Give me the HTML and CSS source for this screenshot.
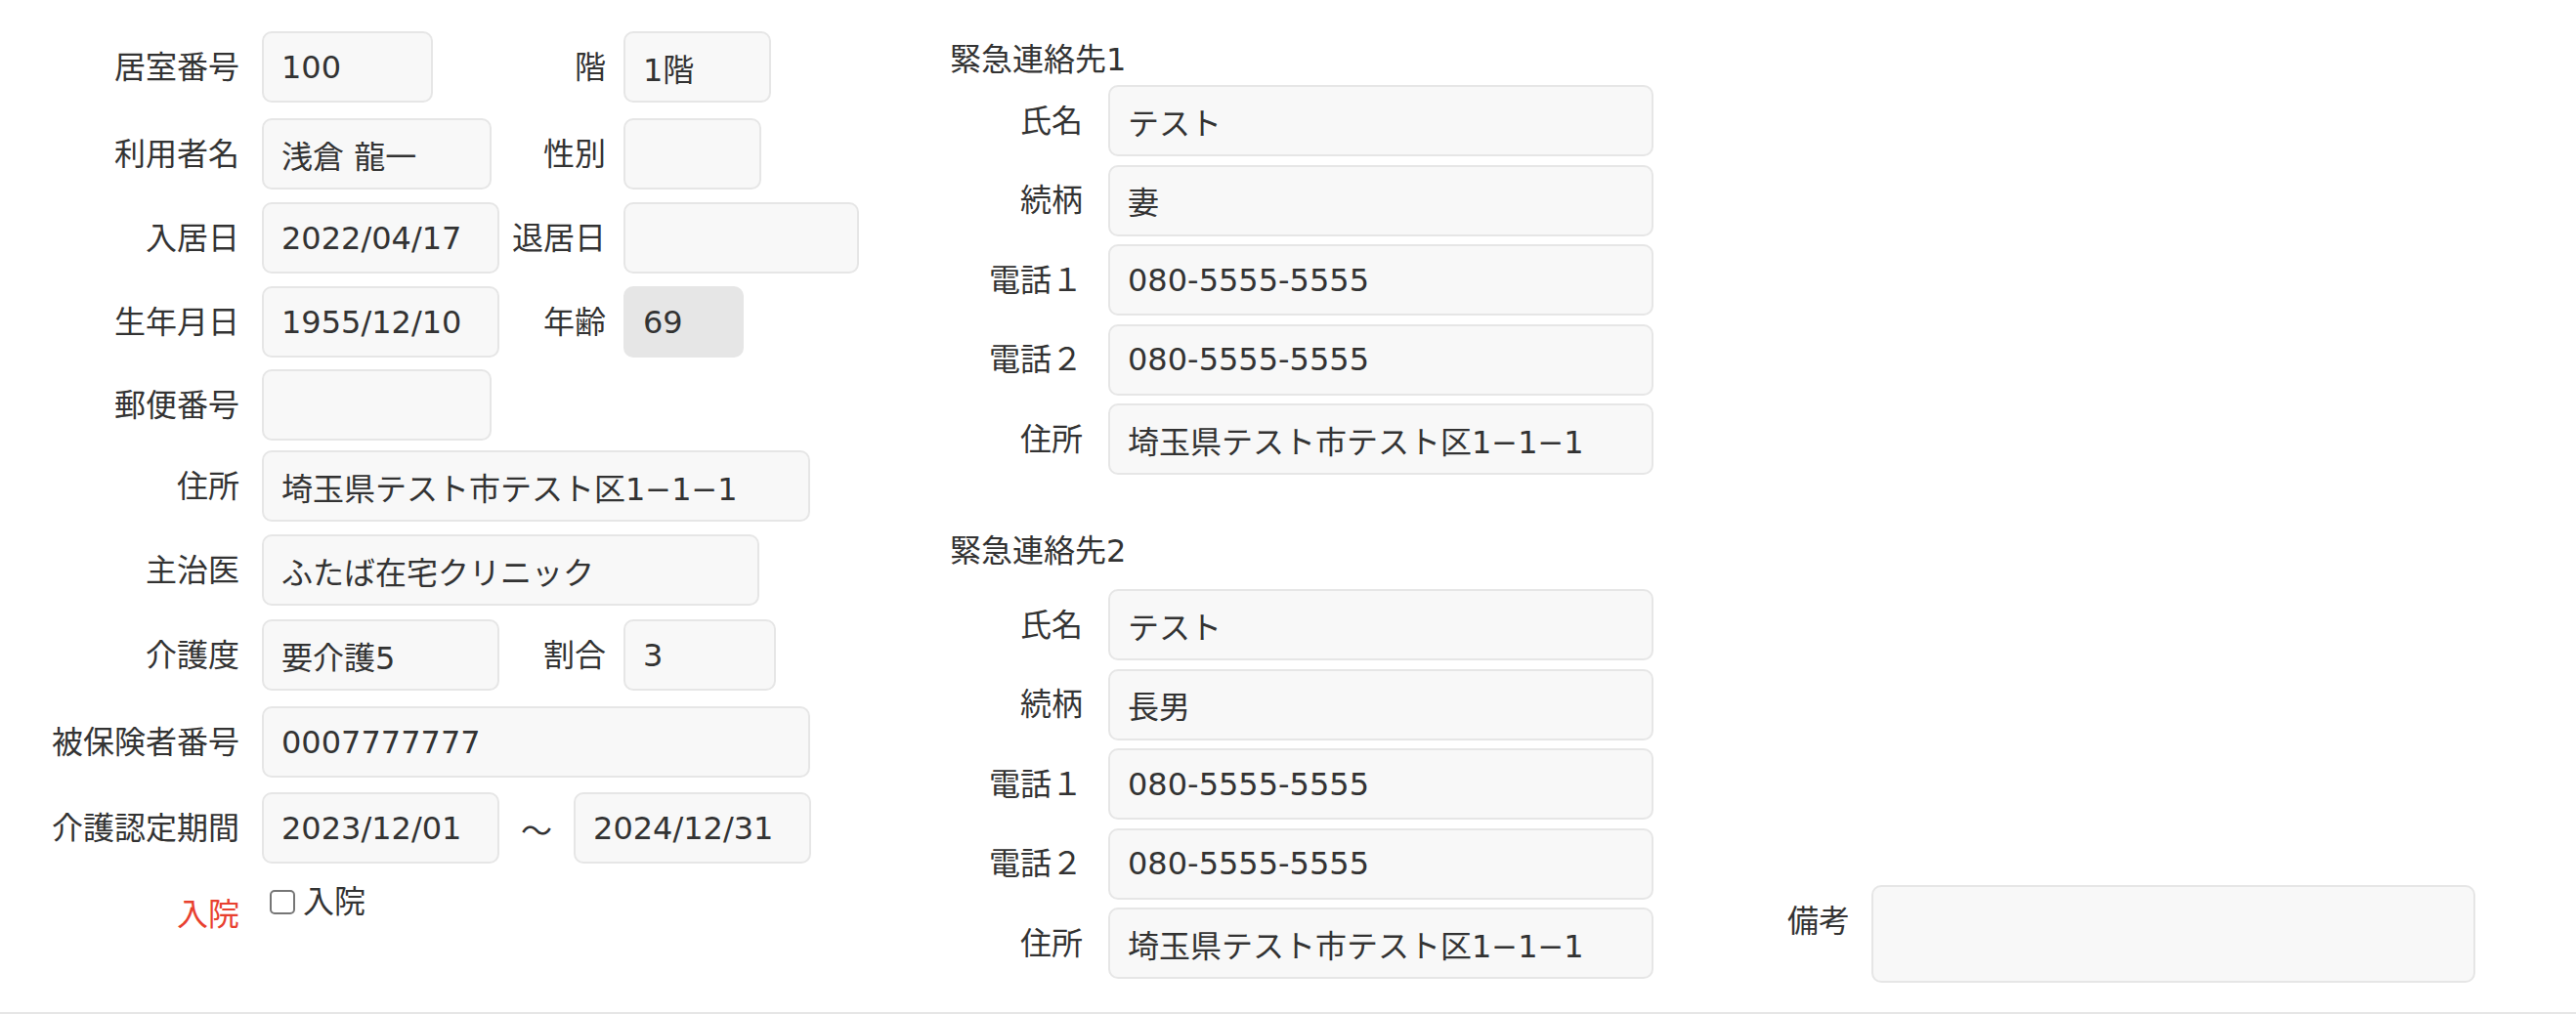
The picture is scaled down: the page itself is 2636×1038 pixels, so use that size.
FILE: index.html
```html
<!DOCTYPE html>
<html lang="ja">
<head>
<meta charset="utf-8">
<title>利用者情報</title>
<link rel="stylesheet" href="styles.css">
</head>
<body>
<div class="page">
  <div class="col-main">
    <div class="row">
      <div class="lbl">居室番号</div>
      <div class="fld w-room">100</div>
      <div class="lbl2">階</div>
      <div class="fld w-floor">1階</div>
    </div>

    <div class="row mt-16">
      <div class="lbl">利用者名</div>
      <div class="fld w-name">浅倉 龍一</div>
      <div class="lbl2">性別</div>
      <div class="fld w-sex"></div>
    </div>

    <div class="row">
      <div class="lbl">入居日</div>
      <div class="fld w-date">2022/04/17</div>
      <div class="lbl2">退居日</div>
      <div class="fld w-date2"></div>
    </div>

    <div class="row">
      <div class="lbl">生年月日</div>
      <div class="fld w-date">1955/12/10</div>
      <div class="lbl2">年齢</div>
      <div class="fld w-age is-disabled">69</div>
    </div>

    <div class="row mt-12">
      <div class="lbl">郵便番号</div>
      <div class="fld w-zip">&nbsp;</div>
    </div>

    <div class="row mt-10">
      <div class="lbl">住所</div>
      <div class="fld span w-wide">埼玉県テスト市テスト区1−1−1</div>
    </div>

    <div class="row">
      <div class="lbl">主治医</div>
      <div class="fld span w-doc">ふたば在宅クリニック</div>
    </div>

    <div class="row mt-14">
      <div class="lbl">介護度</div>
      <div class="fld w-date">要介護5</div>
      <div class="lbl2">割合</div>
      <div class="fld w-ratio">3</div>
    </div>

    <div class="row mt-16">
      <div class="lbl">被保険者番号</div>
      <div class="fld span w-wide">0007777777</div>
    </div>

    <div class="row mt-15">
      <div class="lbl">介護認定期間</div>
      <div class="range span">
        <div class="fld w-date">2023/12/01</div>
        <span class="tilde">〜</span>
        <div class="fld w-date">2024/12/31</div>
      </div>
    </div>

    <div class="row mt-15">
      <div class="lbl is-alert">入院</div>
      <div class="check span">
        <span class="check-box"></span>
        <span class="check-text">入院</span>
      </div>
    </div>
  </div>

  <div class="col-contact">
    <div class="contact">
      <div class="contact-title">緊急連絡先1</div>
      <div class="contact-grid">
        <div class="clbl">氏名</div><div class="fld">テスト</div>
        <div class="clbl">続柄</div><div class="fld">妻</div>
        <div class="clbl">電話１</div><div class="fld">080-5555-5555</div>
        <div class="clbl">電話２</div><div class="fld">080-5555-5555</div>
        <div class="clbl">住所</div><div class="fld">埼玉県テスト市テスト区1−1−1</div>
      </div>
    </div>
    <div class="contact contact-second">
      <div class="contact-title">緊急連絡先2</div>
      <div class="contact-grid">
        <div class="clbl">氏名</div><div class="fld">テスト</div>
        <div class="clbl">続柄</div><div class="fld">長男</div>
        <div class="clbl">電話１</div><div class="fld">080-5555-5555</div>
        <div class="clbl">電話２</div><div class="fld">080-5555-5555</div>
        <div class="clbl">住所</div><div class="fld">埼玉県テスト市テスト区1−1−1</div>
      </div>
    </div>
  </div>

  <div class="col-note">
    <div class="note-lbl">備考</div>
    <div class="fld note-box"></div>
  </div>
</div>
</body>
</html>
```

FILE: styles.css
```css
html, body {
  margin: 0;
  padding: 0;
  background: #ffffff;
}

body {
  font-family: "DejaVu Sans", "Noto Sans CJK JP", sans-serif;
  font-size: 32px;
  color: #333333;
}

.page {
  display: flex;
  align-items: flex-start;
  padding-top: 32px;
  padding-bottom: 30px;
  border-bottom: 2px solid #e6e6e6;
}

/* ---------- left form ---------- */
.col-main {
  width: 880px;
  flex: none;
  display: flex;
  flex-direction: column;
}

.row {
  display: grid;
  grid-template-columns: 268px 244px 126px auto;
  height: 73px;
  margin-top: 13px;
}

.row:first-child { margin-top: 0; }
.row.mt-10 { margin-top: 10px; }
.row.mt-12 { margin-top: 12px; }
.row.mt-14 { margin-top: 14px; }
.row.mt-15 { margin-top: 15px; }
.row.mt-16 { margin-top: 16px; }

.lbl {
  grid-column: 1;
  align-self: center;
  text-align: right;
  padding-right: 23px;
  line-height: 48px;
  white-space: nowrap;
}

.lbl.is-alert {
  color: #e8402f;
}

.lbl2 {
  grid-column: 3;
  align-self: center;
  text-align: right;
  padding-right: 18px;
  line-height: 48px;
  white-space: nowrap;
}

.fld {
  box-sizing: border-box;
  display: flex;
  align-items: center;
  padding: 0 18px;
  background: #f8f8f8;
  border: 2px solid #e6e6e6;
  border-radius: 10px;
  white-space: nowrap;
  color: #333333;
  justify-self: start;
}

.fld.is-disabled {
  background: #e6e6e6;
}

.span {
  grid-column: 2 / -1;
}

.w-room { width: 175px; }
.w-floor { width: 151px; }
.w-name { width: 235px; }
.w-sex { width: 141px; }
.w-date { width: 243px; }
.w-date2 { width: 241px; }
.w-age { width: 123px; }
.w-zip { width: 235px; }
.w-wide { width: 561px; }
.w-doc { width: 509px; }
.w-ratio { width: 156px; }

.range {
  display: flex;
  align-items: stretch;
  gap: 22px;
}

.tilde {
  align-self: center;
  font-family: "Noto Sans CJK JP", sans-serif;
  line-height: 48px;
}

.check {
  align-self: start;
  display: flex;
  align-items: center;
  height: 48px;
  margin-left: 8px;
}

.check-box {
  box-sizing: border-box;
  width: 26px;
  height: 25px;
  border: 2px solid #767676;
  border-radius: 5px;
  background: #ffffff;
}

.check-text {
  margin-left: 8px;
  line-height: 48px;
}

/* ---------- emergency contacts ---------- */
.col-contact {
  flex: none;
  margin-left: 92px;
  margin-top: 5px;
  padding-bottom: 4px;
}

.contact-title {
  line-height: 48px;
  margin-bottom: 2px;
  white-space: nowrap;
}

.contact-second {
  margin-top: 53.5px;
}

.contact-second .contact-title {
  margin-bottom: 15.5px;
}

.contact-grid {
  display: grid;
  grid-template-columns: 162px 558px;
  grid-auto-rows: 73px;
  row-gap: 8.5px;
}

.clbl {
  align-self: center;
  text-align: right;
  padding-right: 26px;
  line-height: 48px;
  white-space: nowrap;
}

.contact-grid .fld {
  width: 558px;
}

/* ---------- note ---------- */
.col-note {
  flex: none;
  align-self: flex-end;
  display: flex;
  align-items: flex-start;
  margin-left: 137px;
}

.note-lbl {
  padding-top: 13px;
  line-height: 48px;
  margin-right: 22px;
  white-space: nowrap;
}

.note-box {
  width: 618px;
  height: 100px;
}
```
